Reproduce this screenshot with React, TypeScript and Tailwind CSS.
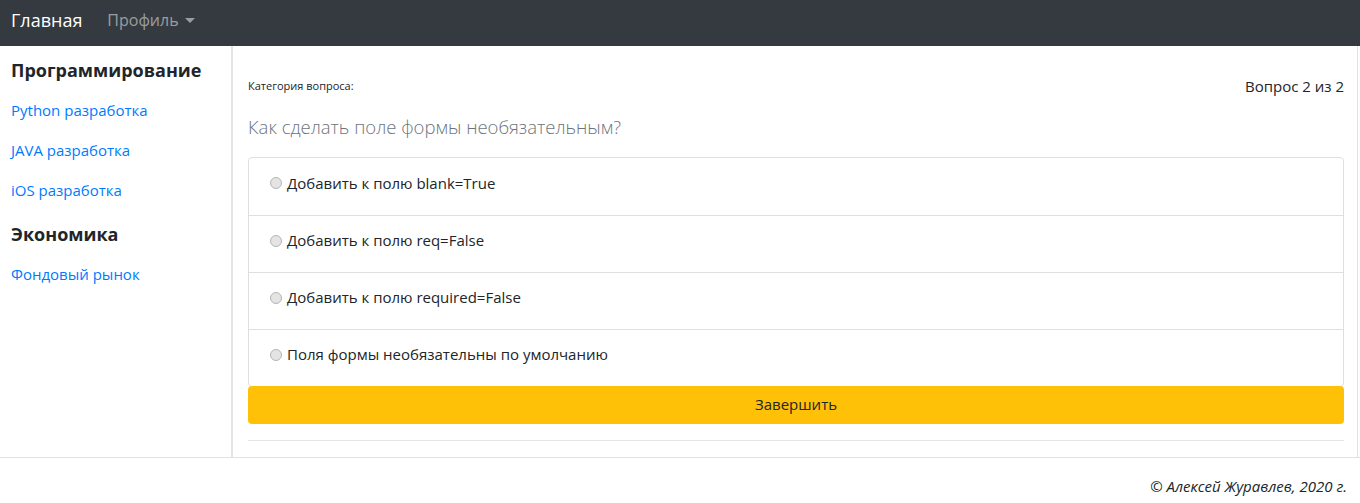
import React, { useState } from "react";

const answers = [
  "Добавить к полю blank=True",
  "Добавить к полю req=False",
  "Добавить к полю required=False",
  "Поля формы необязательны по умолчанию",
];

const sections = [
  {
    title: "Программирование",
    links: ["Python разработка", "JAVA разработка", "iOS разработка"],
  },
  {
    title: "Экономика",
    links: ["Фондовый рынок"],
  },
];

export default function App() {
  const [selected, setSelected] = useState<number | null>(null);

  return (
    <div className="min-h-[503px] bg-white text-[#212529] font-['Open_Sans',sans-serif]">
      <nav className="h-[46px] bg-[#343a40] flex items-center px-[11px] pb-[7px]">
        <span className="text-white text-[18px] leading-none">Главная</span>
        <button className="ml-[25px] flex items-center gap-[6px] text-[16px] text-white/50">
          Профиль
          <span className="w-0 h-0 border-x-[5px] border-x-transparent border-t-[5px] border-t-white/50 mt-[1px]" />
        </button>
      </nav>

      <div className="flex border-b border-[#dee2e6]">
        <aside className="w-[233px] shrink-0 border-r-2 border-[#e2e5e8] pl-[11px] pt-[13px] min-h-[410px]">
          {sections.map((s) => (
            <div key={s.title}>
              <h5 className="text-[18px] font-bold leading-[22px] mb-[9px] text-[#212529]">
                {s.title}
              </h5>
              <ul className="mb-[13px]">
                {s.links.map((l) => (
                  <li key={l} className="h-[40px] flex items-center">
                    <a href="#" className="text-[15px] text-[#007bff]">
                      {l}
                    </a>
                  </li>
                ))}
              </ul>
            </div>
          ))}
        </aside>

        <main className="flex-1 border-r border-[#dee2e6] mr-[2px] pl-[15px] pr-[13px] pt-[29px] pb-[16px]">
          <div className="flex justify-between items-center">
            <span className="text-[11px]">Категория вопроса:</span>
            <span className="text-[15px]">Вопрос 2 из 2</span>
          </div>
          <p className="mt-[16px] text-[18.5px] font-light text-[#6c757d] leading-[26px]">
            Как сделать поле формы необязательным?
          </p>
          <ul className="mt-[17px] border border-[#dfdfdf] rounded-[4px] overflow-hidden">
            {answers.map((a, i) => (
              <li
                key={a}
                className={`h-[57px] flex items-center pl-[21px] pb-[6px] ${
                  i > 0 ? "border-t border-[#dfdfdf]" : ""
                }`}
              >
                <label className="flex items-center gap-[5px] text-[15px] cursor-pointer">
                  <input
                    type="radio"
                    name="answer"
                    checked={selected === i}
                    onChange={() => setSelected(i)}
                    className="appearance-none w-[12px] h-[12px] m-0 rounded-full border border-[#b5b5b5] bg-[#e4e4e4] checked:bg-[#007bff] checked:border-[#007bff]"
                  />
                  {a}
                </label>
              </li>
            ))}
          </ul>
          <button className="w-full h-[38px] rounded-[4px] bg-[#ffc107] text-[15px] text-[#212529] -mt-[1px] relative">
            Завершить
          </button>
          <hr className="mt-[16px] border-t border-[#e5e5e5]" />
        </main>
      </div>

      <footer className="h-[46px] flex items-center justify-end pr-[13px] pt-[12px]">
        <span className="italic text-[15px]">© Алексей Журавлев, 2020 г.</span>
      </footer>
    </div>
  );
}
